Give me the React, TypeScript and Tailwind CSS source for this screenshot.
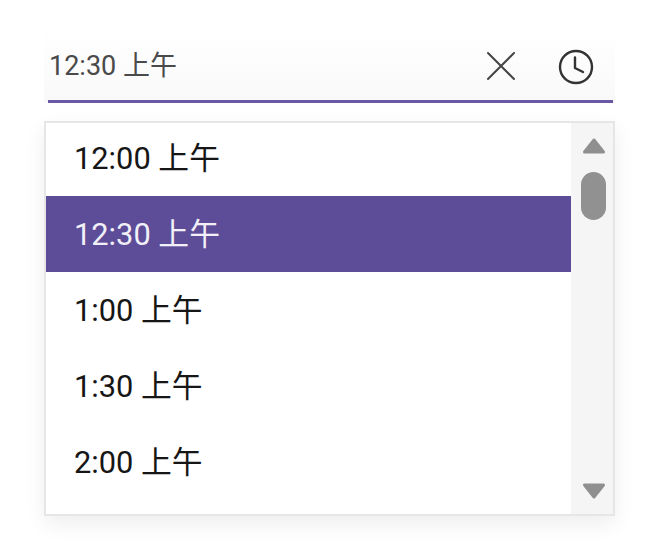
import React from 'react';

const times = ['12:00 上午', '12:30 上午', '1:00 上午', '1:30 上午', '2:00 上午'];

const App: React.FC = () => {
  return (
    <div className="h-[556px] w-[664px] overflow-hidden bg-white font-['Roboto','Noto_Sans_CJK_SC',sans-serif]">
      <div className="ml-[44px] w-[571px] pt-[28px]">
        <div className="flex h-[75px] flex-col bg-gradient-to-b from-white to-[#f9f9f9]">
          <div className="flex flex-1 items-center pl-[5px] pr-[20px]">
            <span className="flex-1 pt-[4px] text-[27px] leading-none text-[#4a4a4a]">12:30 上午</span>
            <svg width="34" height="34" viewBox="0 0 34 34" fill="none" stroke="#444444" strokeWidth="2" strokeLinecap="round" className="mt-[4px] mr-[40px]">
              <path d="M4 4 L30 30 M30 4 L4 30" />
            </svg>
            <svg width="36" height="36" viewBox="0 0 36 36" fill="none" stroke="#333333" strokeWidth="2.4" strokeLinecap="round" strokeLinejoin="round" className="mt-[5px] mr-[1px]">
              <circle cx="18" cy="18" r="16" />
              <path d="M17 8.5 V19 L25 23" />
            </svg>
          </div>
          <div className="mr-[2px] ml-[4px] h-[3px] bg-[#6a58a5]" />
        </div>

        <div className="mt-[18px] flex h-[395px] border-2 border-[#e6e6e6] bg-white shadow-[0_8px_20px_rgba(0,0,0,0.07)]">
          <div className="min-w-0 flex-1">
            {times.map((t, i) => (
              <div
                key={t}
                className={
                  i === 0
                    ? 'flex h-[73px] items-center pb-[1px] pl-[28px] text-[30.8px] text-[#161616]'
                    : i === 1
                      ? 'flex h-[76px] items-center bg-[#5d4c97] pt-[2px] pl-[28px] text-[30.8px] text-[#f1eff7]'
                      : 'flex h-[76px] items-center pt-[2px] pl-[28px] text-[30.8px] text-[#161616]'
                }
              >
                {t}
              </div>
            ))}
          </div>
          <div className="flex w-[42px] flex-col items-center bg-[#f5f5f5] pl-[3px]">
            <svg width="24" height="18" viewBox="0 0 24 18" fill="#8f8f8f" stroke="#8f8f8f" strokeWidth="3" strokeLinejoin="round" className="mt-[14px]">
              <path d="M12 3 L21.5 15 H2.5 Z" />
            </svg>
            <div className="mt-[17px] h-[48px] w-[25px] rounded-full bg-[#919191]" />
            <svg width="24" height="18" viewBox="0 0 24 18" fill="#8f8f8f" stroke="#8f8f8f" strokeWidth="3" strokeLinejoin="round" className="mt-[262px]">
              <path d="M2.5 3 H21.5 L12 15 Z" />
            </svg>
          </div>
        </div>
      </div>
    </div>
  );
};

export default App;
